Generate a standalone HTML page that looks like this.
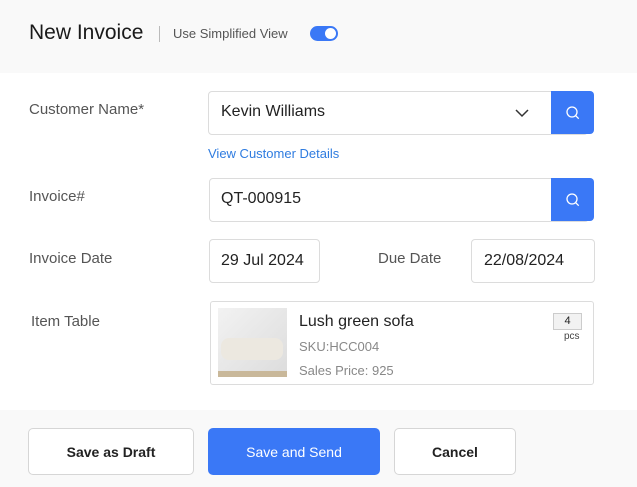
<!DOCTYPE html><html><head><style>
*{box-sizing:border-box;margin:0;padding:0}
body{width:637px;height:487px;position:relative;background:#fff;font-family:"Liberation Sans",sans-serif;overflow:hidden;color:#222}
.a{position:absolute}
.lbl{font-size:15px;color:#555}
.box{border:1px solid #dcdcdc;border-radius:4px;background:#fff}
.sb{background:#3a78f6;border-radius:0 4px 4px 0;display:flex;align-items:center;justify-content:center}
.btn{border:1px solid #d6d6d6;border-radius:5px;background:#fff;font-size:14px;font-weight:bold;display:flex;align-items:center;justify-content:center;color:#222}
</style></head><body>
<div class="a" style="left:0;top:0;width:637px;height:73px;background:#f9f9f9"></div>
<div class="a" style="left:0;top:410px;width:637px;height:77px;background:#f9f9f9"></div>
<div class="a" style="left:29px;top:21px;font-size:21px;color:#1a1a1a">New Invoice</div>
<div class="a" style="left:159px;top:26px;width:1px;height:16px;background:#bbb"></div>
<div class="a" style="left:173px;top:26px;font-size:13px;color:#555">Use Simplified View</div>
<div class="a" style="left:310px;top:26px;width:28px;height:15px;border-radius:8px;background:#3a78f6"><div class="a" style="right:2px;top:2px;width:11px;height:11px;border-radius:50%;background:#fff"></div></div>

<div class="a lbl" style="left:29px;top:101px">Customer Name*</div>
<div class="a box" style="left:208px;top:91px;width:380px;height:44px"></div>
<div class="a" style="left:221px;top:103px;font-size:16px">Kevin Williams</div>
<svg class="a" style="left:515px;top:109px" width="14" height="9" viewBox="0 0 14 9"><path d="M1 1l6 6 6-6" fill="none" stroke="#333" stroke-width="1.5"/></svg>
<div class="a sb" style="left:551px;top:91px;width:43px;height:43px"><svg width="16" height="16" viewBox="0 0 16 16"><circle cx="7" cy="7" r="5" fill="none" stroke="#fff" stroke-width="1.3"/><path d="M10.7 10.7l3 3" stroke="#fff" stroke-width="1.3"/></svg></div>
<div class="a" style="left:208px;top:146px;font-size:13px;color:#2f7ce0">View Customer Details</div>

<div class="a lbl" style="left:29px;top:188px">Invoice#</div>
<div class="a box" style="left:209px;top:178px;width:380px;height:44px"></div>
<div class="a" style="left:221px;top:190px;font-size:16px">QT-000915</div>
<div class="a sb" style="left:551px;top:178px;width:43px;height:43px"><svg width="16" height="16" viewBox="0 0 16 16"><circle cx="7" cy="7" r="5" fill="none" stroke="#fff" stroke-width="1.3"/><path d="M10.7 10.7l3 3" stroke="#fff" stroke-width="1.3"/></svg></div>

<div class="a lbl" style="left:29px;top:250px">Invoice Date</div>
<div class="a box" style="left:209px;top:239px;width:111px;height:44px"></div>
<div class="a" style="left:221px;top:252px;font-size:16px">29 Jul 2024</div>
<div class="a lbl" style="left:378px;top:250px">Due Date</div>
<div class="a box" style="left:471px;top:239px;width:124px;height:44px"></div>
<div class="a" style="left:484px;top:252px;font-size:16px">22/08/2024</div>

<div class="a lbl" style="left:31px;top:313px">Item Table</div>
<div class="a box" style="left:210px;top:301px;width:384px;height:84px;border-radius:3px"></div>
<div class="a" style="left:218px;top:308px;width:69px;height:69px;background:linear-gradient(135deg,#f2f2f2,#dcdcdc)"><div class="a" style="left:3px;top:30px;width:62px;height:22px;border-radius:8px;background:#ece8e0"></div><div class="a" style="left:0;top:63px;width:69px;height:6px;background:#c9b89a"></div></div>
<div class="a" style="left:299px;top:313px;font-size:16px;color:#222">Lush green sofa</div>
<div class="a" style="left:299px;top:339px;font-size:13px;color:#888">SKU:HCC004</div>
<div class="a" style="left:299px;top:363px;font-size:13px;color:#888">Sales Price: 925</div>
<div class="a" style="left:553px;top:313px;width:29px;height:17px;border:1px solid #ccc;background:#f2f2f2;font-size:11px;text-align:center;line-height:15px">4</div>
<div class="a" style="left:564px;top:331px;font-size:10px;color:#444">pcs</div>

<div class="a btn" style="left:28px;top:428px;width:166px;height:47px">Save as Draft</div>
<div class="a btn" style="left:208px;top:428px;width:172px;height:47px;background:#3a78f6;border-color:#3a78f6;color:#fff;font-weight:normal">Save and Send</div>
<div class="a btn" style="left:394px;top:428px;width:122px;height:47px">Cancel</div>
</body></html>
